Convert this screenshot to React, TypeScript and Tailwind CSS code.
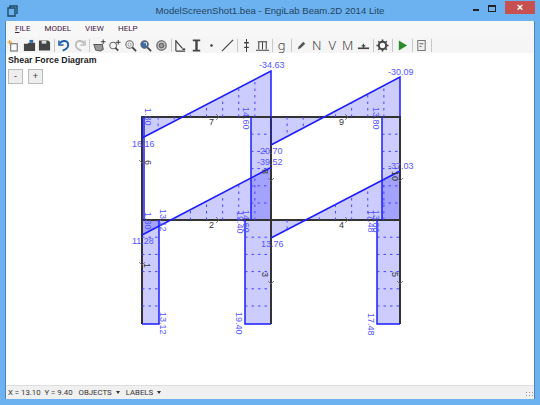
import type { ReactNode } from "react"

const BLUE = "#1c1cff"
const LABEL = "#5555ff"
const X = [142, 271, 400]

function Ico({ children }: { children: ReactNode }) {
  return (
    <svg width="13" height="13" viewBox="0 0 14 14" fill="none" stroke="#444" strokeWidth="1.1">
      {children}
    </svg>
  )
}

const Lens = ({ fill = "none" }: { fill?: string }) => (
  <>
    <circle cx="6" cy="6" r="4" fill={fill} stroke="#666" />
    <path d="M9 9l4 4" stroke="#444" strokeWidth="2" />
  </>
)

const letter = "font-['Noto_Sans',sans-serif] text-[13px] font-light leading-none text-[#444]"

const tools: (ReactNode | null)[] = [
  <Ico><path d="M4 5h7v8H4z" stroke="#666" fill="#fff" /><path d="M3 1v5M0.5 3.5h5" stroke="#e0a030" strokeWidth="1.3" /></Ico>,
  <Ico><path d="M1 5h4l1-1h7v9H1z" fill="#444" stroke="none" /><path d="M7 1l4 0v3l-4 0z" fill="#2a6aa8" stroke="none" /></Ico>,
  <Ico><path d="M1 1.5h10l2 2v9H1z" fill="#444" stroke="none" /><path d="M4 2h5v3H4z" fill="#ddd" stroke="none" /></Ico>,
  null,
  <Ico><path d="M2 5c2-4 9-4 9 1.5 0 3-3 5-6 6" stroke="#1f5fa8" strokeWidth="2" /><path d="M1 1.5v5h5" stroke="#1f5fa8" strokeWidth="1.6" /></Ico>,
  <Ico><path d="M12 5c-2-4-9-4-9 1.5 0 3 3 5 6 6" stroke="#bdbdbd" strokeWidth="2" /><path d="M13 1.5v5H8" stroke="#bdbdbd" strokeWidth="1.6" /></Ico>,
  null,
  <Ico><path d="M1 6l9 0 1 5-3 2-5-1z" fill="#999" stroke="#555" /><path d="M11 0.5v5M8.5 3h5" stroke="#444" /></Ico>,
  <Ico><circle cx="5.5" cy="7" r="3.6" stroke="#666" /><path d="M8 9.5l3 3" strokeWidth="1.8" /><path d="M11 1v5M8.5 3.5h5" /></Ico>,
  <Ico><Lens /><circle cx="6" cy="6" r="1.8" stroke="#aaa" /></Ico>,
  <Ico><Lens fill="#3a6aa8" /><path d="M5 4h3v3" stroke="#ddd" /></Ico>,
  <Ico><circle cx="7" cy="7" r="5" fill="#ccc" stroke="#777" strokeWidth="1.6" /><circle cx="7" cy="7" r="2.5" fill="#999" stroke="#666" /></Ico>,
  null,
  <Ico><path d="M2 13V1M2 2l7 8M2 13h10" strokeWidth="1.3" /><path d="M9 11h3" strokeWidth="1.8" /></Ico>,
  <Ico><path d="M3 1.5h8M3 12.5h8" strokeWidth="1.8" /><path d="M7 2v10" strokeWidth="2.6" /></Ico>,
  <Ico><circle cx="7" cy="7" r="1.3" fill="#333" stroke="none" /></Ico>,
  <Ico><path d="M1 13L13 1" strokeWidth="1.3" /></Ico>,
  null,
  <Ico><path d="M7 0v14" /><path d="M4.5 4h5M4.5 9h5" strokeWidth="1.5" /></Ico>,
  <Ico><path d="M2 3h10M3 3v8M7 3v8M11 3v8M0 12h14" strokeWidth="1.1" /></Ico>,
  null,
  <span className={letter}>g</span>,
  null,
  <Ico><path d="M3 11l1-3 5-5 2 2-5 5z" fill="#555" stroke="none" /></Ico>,
  <span className={letter}>N</span>,
  <span className={letter}>V</span>,
  <span className={letter}>M</span>,
  <Ico><path d="M1 10h12" strokeWidth="1.8" /><path d="M7 5v5M5 7.5h4" strokeWidth="1.3" /></Ico>,
  null,
  <Ico><circle cx="7" cy="7" r="4" strokeWidth="2.2" /><path d="M7 0.5v2M7 11.5v2M0.5 7h2M11.5 7h2M2.4 2.4l1.4 1.4M10.2 10.2l1.4 1.4M11.6 2.4l-1.4 1.4M3.8 10.2l-1.4 1.4" strokeWidth="1.8" /></Ico>,
  null,
  <Ico><path d="M3 1.5l9 5.5-9 5.5z" fill="#2c8c2c" stroke="none" /></Ico>,
  null,
  <Ico><path d="M3 1.5h8v11H3z" stroke="#777" fill="#eee" /><path d="M5 5h4M5 8h2" stroke="#666" /></Ico>,
  null,
]

function Dashes() {
  const beams = [
    { x: 142, base: 117, a: 138, b: 71 },
    { x: 271, base: 117, a: 145, b: 77 },
    { x: 142, base: 220, a: 235, b: 167.5 },
    { x: 271, base: 220, a: 238, b: 171 },
  ]
  const cols = [
    { a: 251, b: 271, top: 117 },
    { a: 382, b: 400, top: 117 },
    { a: 142, b: 159, top: 220 },
    { a: 245, b: 271, top: 220 },
    { a: 377, b: 400, top: 220 },
  ]
  return (
    <g stroke="#4444ff" strokeWidth="1" strokeDasharray="2.5 4">
      {beams.flatMap((b) =>
        [1, 2, 3, 4, 5, 6, 7].map((k) => {
          const x = b.x + k * 16.125
          const y = b.a + ((b.b - b.a) * k) / 8
          return <line key={`${b.x}-${b.base}-${k}`} x1={x} x2={x} y1={b.base} y2={y} />
        })
      )}
      {cols.flatMap((c) =>
        [1, 2, 3, 4, 5].map((k) => {
          const y = c.top + k * 17.2
          return <line key={`${c.a}-${c.top}-${k}`} x1={c.a} x2={c.b} y1={y} y2={y} />
        })
      )}
    </g>
  )
}

function Diagram() {
  const flat: [string, number, number][] = [
    ["-34.63", 259, 68],
    ["-30.09", 388, 74.5],
    ["16.16", 132, 147],
    ["-20.70", 257, 153.5],
    ["-39.52", 257, 165],
    ["-37.03", 388, 168.5],
    ["11.28", 132, 244],
    ["13.76", 261, 247],
  ]
  const turned: [string, number, number][] = [
    ["1.30", 145, 108],
    ["14.60", 243, 107],
    ["13.80", 373, 107],
    ["1.30", 145, 212],
    ["13.12", 160, 209],
    ["14.60", 243, 210],
    ["19.40", 237, 211],
    ["13.80", 373, 210],
    ["17.48", 368, 210],
    ["13.12", 160, 312],
    ["19.40", 236, 312],
    ["17.48", 368, 313],
  ]
  const beamIds: [string, number, number][] = [
    ["7", 209, 125],
    ["9", 339, 125],
    ["2", 209, 228],
    ["4", 339, 228],
  ]
  const colIds: [string, number, number][] = [
    ["6", 145, 160],
    ["8", 262, 169],
    ["10", 392, 171],
    ["1", 144, 263],
    ["3", 262, 272],
    ["5", 392, 272],
  ]
  const shapes = [
    "M142 117V138L271 71V117",
    "M271 117V145L400 77V117",
    "M142 220V235L271 167.5V220",
    "M271 220V238L400 171V220",
    "M144 117V220",
    "M271 117H251V220H271",
    "M400 117H382V220H400",
    "M142 220V324H159V220",
    "M271 220H245V324H271",
    "M400 220H377V324H400",
  ]
  return (
    <svg className="absolute inset-0" width="528" height="332" viewBox="6 53 528 332" fontFamily="'Liberation Sans', sans-serif">
      <g fill="rgba(0,0,255,0.2)" stroke="none">
        {shapes.map((d) => (
          <path key={d} d={d} />
        ))}
      </g>
      <g stroke="#333" strokeWidth="2" fill="none">
        <path d={`M${X[0]} 324V117H${X[2]}V324`} />
        <path d={`M${X[1]} 117V324M${X[0]} 220H${X[2]}`} />
      </g>
      <g fill="none" stroke={BLUE} strokeWidth="1.5">
        <path d="M142 138L271 71V117M271 145L400 77V117" />
        <path d="M142 117V138M271 117V145" strokeOpacity="0.5" />
        <path d="M142 235L271 167.5M271 238L400 171" />
        <path d="M144 117V220M251 117V220M382 117V220" />
        <path d="M159 220V324H142M245 220V324H271M377 220V324H400" />
      </g>
      <Dashes />
      <g fill="#333" stroke="none" fontSize="9">
        {beamIds.map(([t, x, y]) => (
          <text key={t} x={x} y={y}>{t}</text>
        ))}
        {colIds.map(([t, x, y]) => (
          <text key={t} transform={`translate(${x} ${y}) rotate(90)`}>{t}</text>
        ))}
      </g>
      <g stroke="#666" strokeWidth="0.8" fill="none">
        {[216, 345, 216, 345].map((x, i) => (
          <path key={i} d={`M${x} ${i < 2 ? 114 : 217}l3 3l-3 3`} />
        ))}
        {[[142, 160], [271, 178], [400, 178], [142, 262], [271, 281], [400, 281]].map(([x, y], i) => (
          <path key={i} d={`M${x - 3} ${y}l3 3l3 -3`} />
        ))}
      </g>
      <g fill={LABEL} stroke="none" fontSize="9">
        {flat.map(([t, x, y]) => (
          <text key={t} x={x} y={y}>{t}</text>
        ))}
        {turned.map(([t, x, y], i) => (
          <text key={i} transform={`translate(${x} ${y}) rotate(90)`}>{t}</text>
        ))}
      </g>
    </svg>
  )
}

export default function App() {
  return (
    <div className="flex h-[405px] w-[540px] flex-col overflow-hidden bg-[#6cb2f0] font-['Liberation_Sans',sans-serif]">
      {/* title bar */}
      <div className="relative flex h-[21px] shrink-0 items-center px-[7px]">
        <svg width="11" height="12" viewBox="0 0 11 12" fill="none" stroke="#1d4a66" strokeWidth="1.4">
          <path d="M1 3h7v8H1zM3 3V1h7v8" />
        </svg>
        <div className="absolute inset-x-0 text-center text-[9.6px] leading-none text-[#24455f]">
          ModelScreenShot1.bea - EngiLab Beam.2D 2014 Lite
        </div>
        <div className="ml-auto flex h-[21px] items-start">
          <div className="mr-[9px] mt-[9px] h-[1.5px] w-[6px] bg-[#222]" />
          <div className="mr-[9px] mt-[5px] h-[7px] w-[8px] border border-t-2 border-[#222]" />
          <div className="-mr-[2px] mt-px flex h-[13px] w-[30px] items-center justify-center bg-[#c75050] text-[11px] font-bold leading-none text-white">
            ×
          </div>
        </div>
      </div>

      <div className="mx-[5px] mb-[6px] flex min-h-0 flex-1 flex-col border-x border-[#4a86bd] bg-white">
        {/* menu */}
        <div className="flex h-[16px] shrink-0 items-center gap-[14px] bg-[#f7f7f7] pl-[9px] font-['Roboto',sans-serif] text-[8px] leading-none text-[#45203f]">
          <span><u>F</u>ILE</span>
          <span>MODEL</span>
          <span>VIEW</span>
          <span>HELP</span>
        </div>

        {/* toolbar */}
        <div className="flex h-[16px] shrink-0 items-center bg-[#f5f5f5]">
          {tools.map((t, i) =>
            t === null ? (
              <div key={i} className="mx-[1.5px] h-[13px] w-px bg-[#c8c8c8]" />
            ) : (
              <div key={i} className="flex h-[16px] w-[15.5px] items-center justify-center">
                {t}
              </div>
            )
          )}
        </div>

        {/* canvas */}
        <div className="relative min-h-0 flex-1 bg-white pl-[2px] pt-[2px]">
          <Diagram />
          <div className="relative flex flex-col gap-[3px]">
            <div className="text-[8.8px] font-bold leading-[11px] text-[#222]">Shear Force Diagram</div>
            <div className="flex gap-[5px]">
              <div className="flex h-[15px] w-[15px] items-center justify-center border border-[#bbb] bg-[#eee] text-[9px] leading-none text-[#333]">-</div>
              <div className="flex h-[15px] w-[15px] items-center justify-center border border-[#bbb] bg-[#eee] text-[9px] leading-none text-[#333]">+</div>
            </div>
          </div>
        </div>

        {/* status */}
        <div className="relative flex h-[14px] shrink-0 items-center gap-[6px] border-t border-[#ddd] bg-[#f0f0f0] pl-[2px] font-['Roboto',sans-serif] text-[7.8px] leading-none text-[#333]">
          <span className="whitespace-pre">X = 13.10  Y = 9.40</span>
          <span className="flex items-center gap-[4px]">OBJECTS <i className="mt-px border-x-[2.5px] border-t-[3px] border-x-transparent border-t-[#333]" /></span>
          <span className="flex items-center gap-[4px]">LABELS <i className="mt-px border-x-[2.5px] border-t-[3px] border-x-transparent border-t-[#333]" /></span>
          <div className="absolute bottom-[1px] right-[1px] h-[7px] w-[8px] bg-[radial-gradient(#999_40%,transparent_45%)] bg-[length:3px_3px]" />
        </div>
      </div>
    </div>
  )
}
